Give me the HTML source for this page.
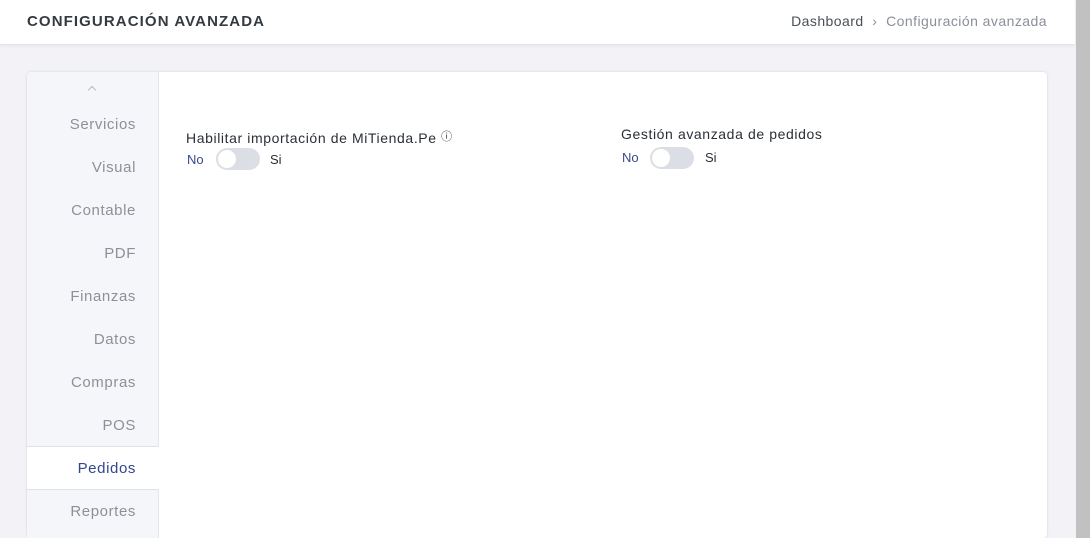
<!DOCTYPE html>
<html><head><style>
html,body{margin:0;width:1090px;height:538px;overflow:hidden}
body{background:#f2f2f7;font-family:"Liberation Sans",sans-serif;position:relative}
.hdr{position:absolute;left:0;top:0;width:1075px;height:44px;background:#fff;border-bottom:1px solid #e2e2e8;box-shadow:0 1px 3px rgba(0,0,0,.05)}
.ttl{position:absolute;left:27px;top:13px;font-size:15px;font-weight:bold;color:#343a40;letter-spacing:1.1px}
.bc{position:absolute;right:28px;top:13px;font-size:14px;color:#8a8f9a;letter-spacing:0.45px}
.bc b{font-weight:normal;color:#495057}
.sb{position:absolute;left:1076px;top:0;width:14px;height:538px;background:#c1c1c1}
.card{position:absolute;left:27px;top:72px;width:1020px;height:466px;background:#fff;border-radius:4px;box-shadow:0 0 2px rgba(0,0,0,.15)}
.side{position:absolute;left:0;top:0;width:131px;height:466px;background:#f5f6fa;border-right:1px solid #e3e5ec;border-radius:4px 0 0 0}
.it{position:absolute;right:22px;font-size:15px;color:#8e9099;text-align:right;letter-spacing:0.6px}
.act{position:absolute;left:0;top:374px;width:132px;height:42px;background:#fff;border-top:1px solid #dde1ea;border-bottom:1px solid #dde1ea}
.lbl{position:absolute;font-size:14px;color:#2a2f36;letter-spacing:0.6px}
.no{position:absolute;font-size:13px;color:#3b4a8a}
.si{position:absolute;font-size:13px;color:#2a2f36}
.tg{position:absolute;width:44px;height:22px;border-radius:11px;background:#dcdee5}
.tg:after{content:"";position:absolute;left:2px;top:2px;width:18px;height:18px;border-radius:50%;background:#fff}
</style></head><body>
<div class="hdr"><div class="ttl">CONFIGURACIÓN AVANZADA</div><div class="bc"><b>Dashboard</b> &nbsp;›&nbsp; Configuración avanzada</div></div>
<div class="sb"></div>
<div class="card">
<div class="side">
<div class="act"></div>
<div style="position:absolute;left:62px;top:15px;width:5px;height:5px;border-left:1px solid #bbb;border-top:1px solid #bbb;transform:rotate(45deg)"></div>
<div class="it" style="top:44px">Servicios</div>
<div class="it" style="top:87px">Visual</div>
<div class="it" style="top:130px">Contable</div>
<div class="it" style="top:173px">PDF</div>
<div class="it" style="top:216px">Finanzas</div>
<div class="it" style="top:259px">Datos</div>
<div class="it" style="top:302px">Compras</div>
<div class="it" style="top:345px">POS</div>
<div class="it" style="top:388px;color:#35468a">Pedidos</div>
<div class="it" style="top:431px">Reportes</div>
</div>
<div class="lbl" style="left:159px;top:56px">Habilitar importación de MiTienda.Pe <span style="font-size:11px;vertical-align:3px">ⓘ</span></div>
<div class="no" style="left:160px;top:80px">No</div><div class="tg" style="left:189px;top:76px"></div><div class="si" style="left:243px;top:80px">Si</div>
<div class="lbl" style="left:594px;top:54px">Gestión avanzada de pedidos</div>
<div class="no" style="left:595px;top:78px">No</div><div class="tg" style="left:623px;top:75px"></div><div class="si" style="left:678px;top:78px">Si</div>
</div>
</body></html>
